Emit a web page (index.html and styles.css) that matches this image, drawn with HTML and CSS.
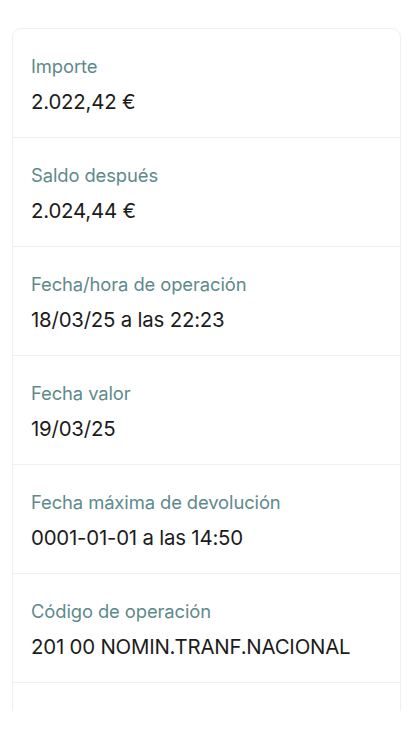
FILE: index.html
```html
<!DOCTYPE html>
<html lang="es">
<head>
    <meta charset="UTF-8">
    <meta name="viewport" content="width=device-width, initial-scale=1.0">
    <title>Detalle de movimiento</title>
    <link rel="stylesheet" href="styles.css">
</head>
<body>
    <div class="scroll">
        <div class="card">
            <div class="row">
                <div class="label">Importe</div>
                <div class="value">2.022,42 €</div>
            </div>
            <div class="row">
                <div class="label">Saldo después</div>
                <div class="value">2.024,44 €</div>
            </div>
            <div class="row">
                <div class="label">Fecha/hora de operación</div>
                <div class="value">18/03/25 a las 22:23</div>
            </div>
            <div class="row">
                <div class="label">Fecha valor</div>
                <div class="value">19/03/25</div>
            </div>
            <div class="row">
                <div class="label">Fecha máxima de devolución</div>
                <div class="value">0001-01-01 a las 14:50</div>
            </div>
            <div class="row">
                <div class="label">Código de operación</div>
                <div class="value">201 00 NOMIN.TRANF.NACIONAL</div>
            </div>
            <!-- next row starts below the fold -->
            <div class="row row-empty"></div>
        </div>
    </div>
</body>
</html>
```

FILE: styles.css
```css
body {
    margin: 0;
    background-color: #fff;
    font-family: Inter, "Noto Sans", sans-serif;
}

.scroll {
    height: 711px;
    overflow: hidden;
    padding: 28px 19px 0 12px;
    box-sizing: border-box;
}

.card {
    border: 1px solid #efefef;
    border-radius: 9px;
}

.row {
    padding: 25px 18px 23px;
    border-bottom: 1px solid #efefef;
}

.row-empty {
    height: 60px;
}

.label {
    font-size: 18.4px;
    line-height: 24px;
    color: #5e8a8c;
    margin-bottom: 12px;
    letter-spacing: -0.1px;
}

.value {
    font-size: 20.4px;
    line-height: 24px;
    color: #1c1c1c;
    letter-spacing: -0.2px;
}
```
